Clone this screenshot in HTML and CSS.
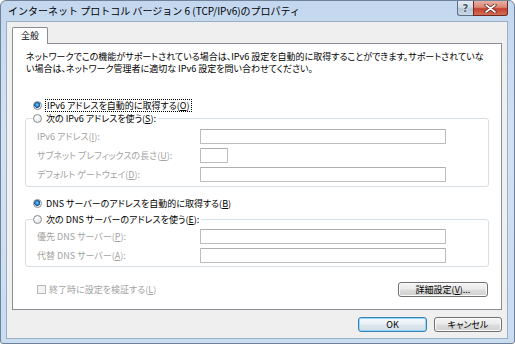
FILE: index.html
```html
<!DOCTYPE html>
<html lang="ja">
<head>
    <meta charset="UTF-8">
    <title>インターネット プロトコル バージョン 6 (TCP/IPv6)のプロパティ</title>
    <link rel="stylesheet" href="styles.css">
</head>
<body>
    <div class="window">
        <div class="titlebar">
            <span class="title">インターネット プロトコル バージョン 6 (TCP/IPv6)のプロパティ</span>
            <div class="caption-buttons">
                <span class="cap-help">?</span>
                <span class="cap-close">
                    <svg width="13" height="9" viewBox="0 0 13 9">
                        <path d="M2 1 L11 8 M11 1 L2 8" stroke="#5a1d17" stroke-width="3.2" stroke-linecap="round"/>
                        <path d="M2 1 L11 8 M11 1 L2 8" stroke="#ffffff" stroke-width="1.6" stroke-linecap="round"/>
                    </svg>
                </span>
            </div>
        </div>

        <div class="client">
            <div class="tabs">
                <div class="tab">全般</div>
            </div>

            <div class="panel">
                <p class="intro">ネットワークでこの機能がサポートされている場合は、IPv6 設定を自動的に取得することができます。サポートされていな<br>い場合は、ネットワーク管理者に適切な IPv6 設定を問い合わせてください。</p>

                <div class="option first">
                    <span class="radio checked"></span>
                    <span class="focus">IPv6 アドレスを自動的に取得する(<u>O</u>)</span>
                </div>

                <fieldset class="group">
                    <legend class="option">
                        <span class="radio"></span>
                        <span>次の IPv6 アドレスを使う(<u>S</u>):</span>
                    </legend>
                    <div class="field top">
                        <span class="label">IPv6 アドレス(<u>I</u>):</span>
                        <span class="textbox"></span>
                    </div>
                    <div class="field">
                        <span class="label">サブネット プレフィックスの長さ(<u>U</u>):</span>
                        <span class="textbox short"></span>
                    </div>
                    <div class="field">
                        <span class="label">デフォルト ゲートウェイ(<u>D</u>):</span>
                        <span class="textbox"></span>
                    </div>
                </fieldset>

                <div class="option second">
                    <span class="radio checked"></span>
                    <span>DNS サーバーのアドレスを自動的に取得する(<u>B</u>)</span>
                </div>

                <fieldset class="group dns">
                    <legend class="option">
                        <span class="radio"></span>
                        <span>次の DNS サーバーのアドレスを使う(<u>E</u>):</span>
                    </legend>
                    <div class="field top">
                        <span class="label">優先 DNS サーバー(<u>P</u>):</span>
                        <span class="textbox"></span>
                    </div>
                    <div class="field">
                        <span class="label">代替 DNS サーバー(<u>A</u>):</span>
                        <span class="textbox"></span>
                    </div>
                </fieldset>

                <div class="bottom-row">
                    <div class="check-option">
                        <span class="checkbox"></span>
                        <span>終了時に設定を検証する(<u>L</u>)</span>
                    </div>
                    <span class="button advanced">詳細設定(<u>V</u>)...</span>
                </div>
            </div>

            <div class="footer">
                <span class="button default">OK</span>
                <span class="button">キャンセル</span>
            </div>
        </div>
    </div>
</body>
</html>
```

FILE: styles.css
```css
* {
    margin: 0;
    padding: 0;
    box-sizing: border-box;
}

body {
    background: #ffffff;
    font-family: "Noto Sans CJK JP", "Noto Sans", sans-serif;
    font-size: 9px;
    color: #000000;
}

u {
    text-decoration: underline;
    text-underline-offset: 1px;
}

/* window frame */

.window {
    width: 515px;
    height: 344px;
    border: 1px solid #6f8299;
    border-radius: 6px 6px 3px 3px;
    background: linear-gradient(#c3d7ee 0%, #d3e2f3 40%, #c9dcf0 100%);
    padding: 0 6px 4px 5px;
    display: flex;
    flex-direction: column;
}

.titlebar {
    height: 20px;
    display: flex;
    align-items: flex-start;
}

.title {
    padding-left: 2px;
    line-height: 20px;
    font-size: 10px;
    color: #000000;
    white-space: nowrap;
}

.caption-buttons {
    margin-left: auto;
    display: flex;
}

.cap-help,
.cap-close {
    height: 15px;
    border: 1px solid #5c6f86;
    border-top: none;
    display: flex;
    align-items: center;
    justify-content: center;
}

.cap-help {
    width: 16px;
    border-right: none;
    border-radius: 0 0 0 3px;
    background: linear-gradient(#e3ebf4 0%, #d0dbe7 45%, #b7c6d7 55%, #c9d7e6 100%);
    color: #4a5868;
    font-family: "DejaVu Sans", sans-serif;
    font-size: 10px;
    font-weight: bold;
    text-shadow: 0 0 2px #ffffff;
}

.cap-close {
    width: 35px;
    border-color: #6e2a22;
    border-radius: 0 0 3px 0;
    background: linear-gradient(#e7b0a4 0%, #d98675 45%, #c2402f 55%, #d46e56 100%);
}

/* client area */

.client {
    flex: 1;
    border: 1px solid #9aaec6;
    background: #efefef;
    padding: 5px 5px 6px;
    display: flex;
    flex-direction: column;
}

.tabs {
    display: flex;
    height: 16px;
}

.tab {
    position: relative;
    z-index: 1;
    width: 36px;
    height: 17px;
    background: #ffffff;
    border: 1px solid #898c95;
    border-bottom: none;
    border-radius: 2px 2px 0 0;
    line-height: 15px;
    text-align: center;
    font-size: 9px;
}

.panel {
    flex: 1;
    background: #ffffff;
    border: 1px solid #898c95;
    padding: 7px 12px 0;
    font-feature-settings: "palt";
}

.intro {
    padding-left: 1px;
    line-height: 12px;
    white-space: nowrap;
}

.option {
    height: 12px;
    display: flex;
    align-items: center;
    gap: 4px;
    white-space: nowrap;
}

.option.first {
    margin-top: 24px;
    padding-left: 8px;
}

.option.second {
    margin-top: 10px;
    padding-left: 8px;
}

.radio {
    width: 9px;
    height: 9px;
    border: 1px solid #8b8d90;
    border-radius: 50%;
    background: radial-gradient(circle at 40% 35%, #ffffff 0%, #e4e5e6 80%);
    flex-shrink: 0;
}

.radio.checked {
    background: radial-gradient(circle at 45% 40%, #7fd0f7 0, #2a8ad4 1.6px, #17508f 2.8px, #eef0f2 3.3px, #dcdedf 100%);
}

.focus {
    outline: 1px dotted #000000;
    outline-offset: 0;
    padding: 0 1px;
    line-height: 11px;
}

.group {
    margin-top: 1px;
    border: 1px solid #d5dfe5;
    border-radius: 3px;
    padding: 0 0 4px;
}

.group legend {
    margin-left: 7px;
    padding: 0 2px 0 0;
}

.group.dns {
    margin-top: 4px;
    padding-bottom: 3px;
}

.field {
    height: 15px;
    margin-top: 4px;
    padding-left: 11px;
    display: flex;
    align-items: center;
    color: #a3a3a3;
    white-space: nowrap;
}

.field.top {
    margin-top: 5px;
}

.group.dns .field.top {
    margin-top: 4px;
}

.label {
    width: 163px;
}

.textbox {
    width: 246px;
    height: 15px;
    border: 1px solid #bcbcbc;
    border-top-color: #aeaeae;
    border-radius: 1px;
    background: #ffffff;
}

.textbox.short {
    width: 28px;
}

.bottom-row {
    margin-top: 15px;
    padding: 0 1px 0 12px;
    height: 15px;
    display: flex;
    align-items: center;
    justify-content: space-between;
}

.check-option {
    display: flex;
    align-items: center;
    gap: 3px;
    color: #a3a3a3;
}

.checkbox {
    width: 9px;
    height: 9px;
    border: 1px solid #b8b8b8;
    background: #f3f3f3;
}

/* buttons */

.button {
    height: 15px;
    border: 1px solid #707070;
    border-radius: 3px;
    background: linear-gradient(#f3f3f3 0%, #ebebeb 48%, #dddddd 52%, #d0d0d0 100%);
    box-shadow: inset 0 0 0 1px #fbfbfb;
    display: flex;
    align-items: center;
    justify-content: center;
    font-size: 9px;
    white-space: nowrap;
    font-feature-settings: "palt";
}

.button.advanced {
    width: 90px;
}

.footer {
    margin-top: 7px;
    display: flex;
    justify-content: flex-end;
    gap: 7px;
}

.footer .button {
    width: 68px;
}

.button.default {
    width: 69px;
    border-color: #3c7fb1;
    box-shadow: inset 0 0 0 1px #8fd6f8;
    background: linear-gradient(#f4f8fb 0%, #eaf1f6 48%, #dde7ee 52%, #d3dde5 100%);
}
```
